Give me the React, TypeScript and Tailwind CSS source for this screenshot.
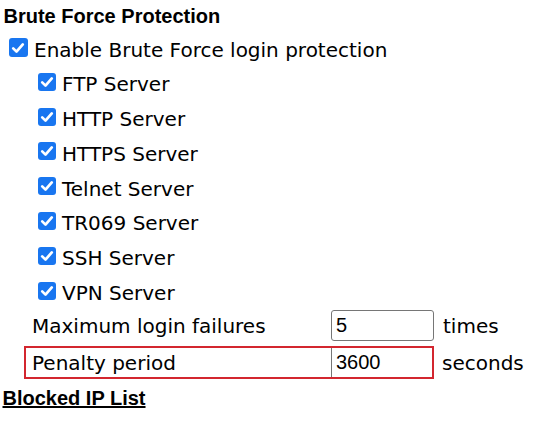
import React from "react";

function Check({ sub }: { sub?: boolean }) {
  return (
    <span
      className={
        sub
          ? "flex items-center justify-center w-[18px] h-[18px] shrink-0 rounded-[3px] bg-[#1976f0] mb-[6px] mr-[6px]"
          : "flex items-center justify-center w-[18.5px] h-[18.5px] shrink-0 rounded-[3px] bg-[#1976f0] mb-[6px] mr-[6.5px]"
      }
    >
      <svg width="14" height="14" viewBox="0 0 14 14" fill="none">
        <path d="M2.2 7.4 L5.5 10.6 L11.8 3.4" stroke="white" strokeWidth="2.7" strokeLinecap="round" strokeLinejoin="round" />
      </svg>
    </span>
  );
}

function CheckRow({ label, sub }: { label: string; sub?: boolean }) {
  return (
    <div className={sub ? "flex items-center h-[34.8px] pl-[38px]" : "flex items-center h-[33.4px] pl-[9px]"}>
      <Check sub={sub} />
      <span className="whitespace-nowrap">{label}</span>
    </div>
  );
}

const servers = [
  "FTP Server",
  "HTTP Server",
  "HTTPS Server",
  "Telnet Server",
  "TR069 Server",
  "SSH Server",
  "VPN Server",
];

export default function App() {
  return (
    <div className="w-[540px] h-[421px] bg-white text-black font-['DejaVu_Sans',Verdana,sans-serif] text-[20px] leading-[23px] overflow-hidden">
      <div className="h-[34px] pt-[4.5px] pl-[3.5px] font-['Liberation_Sans',Arial,sans-serif] font-bold">
        Brute Force Protection
      </div>
      <CheckRow label="Enable Brute Force login protection" />
      {servers.map((s) => (
        <CheckRow key={s} label={s} sub />
      ))}
      <div className="flex items-center h-[35px] pl-[32px]">
        <span className="w-[299px] whitespace-nowrap mb-[3px]">Maximum login failures</span>
        <input
          readOnly
          defaultValue="5"
          className="w-[103px] h-[31px] mb-[6px] border border-[#767676] rounded-[3px] pl-[4px] font-['Liberation_Sans',Arial,sans-serif] text-[20px] text-black outline-none"
        />
        <span className="ml-[9px] mb-[3px]">times</span>
      </div>
      <div className="flex items-center h-[33px] pl-[24px]">
        <div className="flex items-center w-[410px] h-[33px] border-2 border-[#d3262f]">
          <span className="flex-1 pl-[6px] mt-[2px] whitespace-nowrap">Penalty period</span>
          <input
            readOnly
            defaultValue="3600"
            className="w-[101px] h-full border-l border-[#767676] pl-[4px] font-['Liberation_Sans',Arial,sans-serif] text-[20px] text-black outline-none"
          />
        </div>
        <span className="ml-[8px] mt-[2px]">seconds</span>
      </div>
      <div className="pt-[8.5px] pl-[2.5px] font-['Liberation_Sans',Arial,sans-serif] font-bold underline decoration-2">
        Blocked IP List
      </div>
    </div>
  );
}
